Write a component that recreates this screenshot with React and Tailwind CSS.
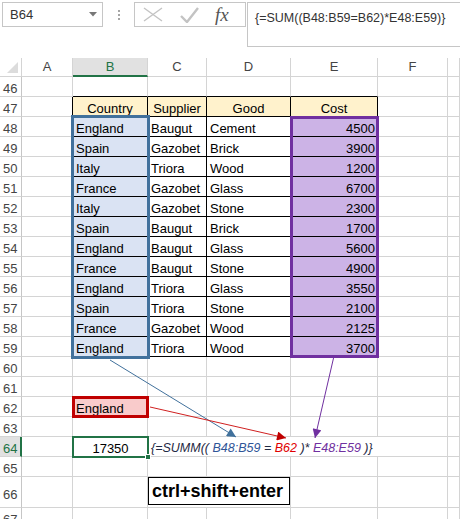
import React from "react";

const rows = [
  ["England", "Baugut", "Cement", 4500],
  ["Spain", "Gazobet", "Brick", 3900],
  ["Italy", "Triora", "Wood", 1200],
  ["France", "Gazobet", "Glass", 6700],
  ["Italy", "Gazobet", "Stone", 2300],
  ["Spain", "Baugut", "Brick", 1700],
  ["England", "Baugut", "Glass", 5600],
  ["France", "Baugut", "Stone", 4900],
  ["England", "Triora", "Glass", 3550],
  ["Spain", "Triora", "Stone", 2100],
  ["France", "Gazobet", "Wood", 2125],
  ["England", "Triora", "Wood", 3700],
];

const gridLine = "border-r border-b border-[#d4d4d4]";
const cellText = "whitespace-nowrap px-[3px] pt-[5px] leading-[13px]";

function RowNum({ n, active, tall }) {
  return (
    <div
      className={`${
        active
          ? "border-r-2 border-r-[#217346] bg-[#e1e1e1] text-[#217346]"
          : "border-r border-r-[#c6c6c6] text-[#444]"
      } ${tall ? "pt-[11px]" : "pt-[5px]"} border-b border-b-[#d4d4d4] pl-[3px] leading-[13px]`}
    >
      {n}
    </div>
  );
}

function Blank({ className = "" }) {
  return <div className={`${gridLine} ${className}`} />;
}

// plain row: number + 7 empty cells
function EmptyRow({ n }) {
  return (
    <>
      <RowNum n={n} />
      {[0, 1, 2, 3, 4, 5, 6].map((i) => (
        <Blank key={i} />
      ))}
    </>
  );
}

const App = () => {
  return (
    <div className="relative h-[519px] w-[460px] overflow-hidden bg-white font-['Liberation_Sans',Arial,sans-serif] text-[13px] text-black">
      {/* formula bar */}
      <div className="flex h-[58px] items-start pl-[2px] pt-[2px]">
        <div className="flex h-[25px] w-[101px] items-center justify-between border border-[#c6c6c6] pl-[7px] pr-[5px] text-[#333]">
          <span>B64</span>
          <svg width="8" height="5" viewBox="0 0 8 5">
            <path d="M0 0 L8 0 L4 4.5 z" fill="#777" />
          </svg>
        </div>
        <div className="flex h-[25px] w-[31px] flex-col items-center justify-center gap-[2px]">
          <div className="h-[2px] w-[2px] bg-[#a6a6a6]" />
          <div className="h-[2px] w-[2px] bg-[#a6a6a6]" />
          <div className="h-[2px] w-[2px] bg-[#a6a6a6]" />
        </div>
        <div className="flex h-[25px] w-[112px] items-center border border-[#c6c6c6] pl-[8px]">
          <svg width="20" height="15" viewBox="0 0 20 15">
            <path d="M1 1 L19 14 M19 1 L1 14" stroke="#c3c3c3" strokeWidth="1.4" fill="none" />
          </svg>
          <svg className="ml-[17px]" width="19" height="16" viewBox="0 0 19 16">
            <path d="M1 9 L7 15 L18 1" stroke="#c3c3c3" strokeWidth="2.4" fill="none" />
          </svg>
          <span className="ml-[16px] font-['Liberation_Serif',serif] text-[19px] italic leading-none text-[#555]">
            fx
          </span>
        </div>
        <div className="ml-px h-[45px] flex-1 border border-r-0 border-[#c6c6c6] pl-[7px] pt-[6px] text-[12.5px] text-[#333]">
          {"{=SUM((B48:B59=B62)*E48:E59)}"}
        </div>
      </div>

      {/* sheet */}
      <div className="grid grid-cols-[22px_51px_75px_59px_84px_87px_70px_1fr] grid-rows-[19px_repeat(20,20px)_31px_20px]">
        {/* column headers */}
        <div className={`${gridLine} flex items-end justify-end p-[3px]`}>
          <svg width="11" height="11" viewBox="0 0 11 11">
            <polygon points="11,0 11,11 0,11" fill="#dcdcdc" />
          </svg>
        </div>
        <div className={`${gridLine} flex items-center justify-center text-[#444]`}>A</div>
        <div className="flex items-center justify-center border-r border-b-2 border-r-[#d4d4d4] border-b-[#217346] bg-[#e1e1e1] text-[#217346]">
          B
        </div>
        <div className={`${gridLine} flex items-center justify-center text-[#444]`}>C</div>
        <div className={`${gridLine} flex items-center justify-center text-[#444]`}>D</div>
        <div className={`${gridLine} flex items-center justify-center text-[#444]`}>E</div>
        <div className={`${gridLine} flex items-center justify-center text-[#444]`}>F</div>
        <Blank />

        {/* 46 */}
        <RowNum n={46} />
        <Blank />
        <div className="border-r border-b border-r-[#d4d4d4] border-b-black" />
        <div className="border-r border-b border-r-[#d4d4d4] border-b-black" />
        <div className="border-r border-b border-r-[#d4d4d4] border-b-black" />
        <div className="border-r border-b border-r-[#d4d4d4] border-b-black" />
        <Blank />
        <Blank />

        {/* 47 */}
        <RowNum n={47} />
        <div className="border-r border-b border-r-black border-b-[#d4d4d4]" />
        {["Country", "Supplier", "Good", "Cost"].map((h) => (
          <div key={h} className={`border-r border-b border-black bg-[#fff2cc] text-center ${cellText}`}>
            {h}
          </div>
        ))}
        <Blank />
        <Blank />

        {/* 48..59 */}
        {rows.map((r, i) => (
          <React.Fragment key={i}>
            <RowNum n={48 + i} />
            <Blank />
            {i === 0 && (
              <div className="relative z-10 row-span-12 flex flex-col bg-[#dae3f3] outline-3 outline-[#41719c] -outline-offset-1">
                {rows.map((c, j) => (
                  <div key={j} className={`h-5 shrink-0 border-b border-black ${cellText}`}>
                    {c[0]}
                  </div>
                ))}
              </div>
            )}
            <div className={`border-r border-b border-black ${cellText}`}>{r[1]}</div>
            <div className={`border-r border-b border-black ${cellText}`}>{r[2]}</div>
            {i === 0 && (
              <div className="relative z-10 row-span-12 flex flex-col bg-[#ccb3e6] outline-3 outline-[#7030a0] -outline-offset-2">
                {rows.map((c, j) => (
                  <div key={j} className={`h-5 shrink-0 border-b border-black text-right ${cellText}`}>
                    {c[3]}
                  </div>
                ))}
              </div>
            )}
            <Blank />
            <Blank />
          </React.Fragment>
        ))}

        <EmptyRow n={60} />
        <EmptyRow n={61} />

        {/* 62 */}
        <RowNum n={62} />
        <Blank />
        <div className={`relative z-10 bg-[#f9cbcb] outline-3 outline-[#c00000] -outline-offset-2 ${cellText}`}>
          England
        </div>
        <Blank />
        <Blank />
        <Blank />
        <Blank />
        <Blank />

        <EmptyRow n={63} />

        {/* 64 */}
        <RowNum n={64} active />
        <Blank />
        <div className={`relative z-10 text-center outline-2 outline-[#217346] -outline-offset-1 ${cellText}`}>
          17350
          <div className="absolute -right-[3px] -bottom-[3px] h-[6px] w-[6px] border border-white bg-[#217346]" />
        </div>
        <div className={`${gridLine} col-span-4 whitespace-nowrap pl-[3px] pt-[5px] text-[12.5px] italic leading-[13px]`}>
          <span className="text-[#1f2a44]">{"{=SUMM(("}</span>
          <span className="text-[#2f5597]"> B48:B59</span>
          <span className="text-[#1f2a44]"> = </span>
          <span className="text-[#e00000]">B62</span>
          <span className="text-[#1f2a44]"> )*</span>
          <span className="text-[#7030a0]"> E48:E59</span>
          <span className="text-[#1f2a44]"> {")}"}</span>
        </div>
        <Blank />

        <EmptyRow n={65} />

        {/* 66 */}
        <RowNum n={66} tall />
        <Blank />
        <Blank />
        <div className="col-span-2 border-r border-b border-[#d4d4d4]">
          <div className="flex h-[28px] items-center border border-black pl-[3px] text-[18px] font-bold">
            ctrl+shift+enter
          </div>
        </div>
        <Blank />
        <Blank />
        <Blank />

        <EmptyRow n={67} />
      </div>

      {/* reference arrows */}
      <svg className="pointer-events-none absolute top-0 left-0" width="460" height="519">
        <defs>
          <marker id="hb" viewBox="0 0 10 10" refX="10" refY="5" markerWidth="10" markerHeight="9" markerUnits="userSpaceOnUse" orient="auto">
            <path d="M0 0 L10 5 L0 10 z" fill="#41719c" />
          </marker>
          <marker id="hr" viewBox="0 0 10 10" refX="10" refY="5" markerWidth="10" markerHeight="9" markerUnits="userSpaceOnUse" orient="auto">
            <path d="M0 0 L10 5 L0 10 z" fill="#c00000" />
          </marker>
          <marker id="hp" viewBox="0 0 10 10" refX="10" refY="5" markerWidth="10" markerHeight="9" markerUnits="userSpaceOnUse" orient="auto">
            <path d="M0 0 L10 5 L0 10 z" fill="#7030a0" />
          </marker>
        </defs>
        <line x1="110" y1="360" x2="236" y2="437" stroke="#41719c" strokeWidth="1" markerEnd="url(#hb)" />
        <line x1="150" y1="407" x2="286" y2="438" stroke="#d02020" strokeWidth="1" markerEnd="url(#hr)" />
        <line x1="334" y1="356" x2="315" y2="438" stroke="#7030a0" strokeWidth="1" markerEnd="url(#hp)" />
      </svg>
    </div>
  );
};

export default App;
